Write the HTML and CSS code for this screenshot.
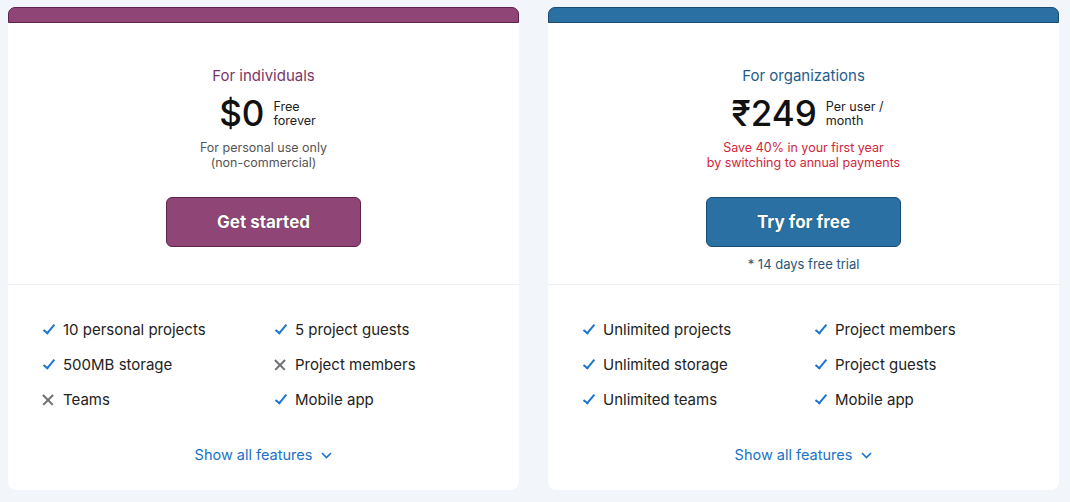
FILE: index.html
```html
<!DOCTYPE html>
<html lang="en">
<head>
    <meta charset="UTF-8">
    <meta name="viewport" content="width=device-width, initial-scale=1.0">
    <title>Pricing</title>
    <link rel="stylesheet" href="styles.css">
</head>
<body>
    <div class="plans">
        <div class="plan plan-personal">
            <div class="plan-band"></div>
            <div class="plan-top">
                <div class="plan-name">For individuals</div>
                <div class="price">
                    <span class="price-amount">$0</span>
                    <span class="price-note">Free<br>forever</span>
                </div>
                <div class="plan-sub">For personal use only<br>(non-commercial)</div>
                <button class="plan-button">Get started</button>
            </div>
            <div class="plan-features">
                <ul class="feature-list">
                    <li><span class="icon yes"></span>10 personal projects</li>
                    <li><span class="icon yes"></span>5 project guests</li>
                    <li><span class="icon yes"></span>500MB storage</li>
                    <li><span class="icon no"></span>Project members</li>
                    <li><span class="icon no"></span>Teams</li>
                    <li><span class="icon yes"></span>Mobile app</li>
                </ul>
                <a class="show-all" href="#">Show all features
                    <svg width="11" height="7" viewBox="0 0 11 7"><path d="M1 1l4.5 4.5L10 1" fill="none" stroke="currentColor" stroke-width="1.6"/></svg>
                </a>
            </div>
        </div>

        <div class="plan plan-org">
            <div class="plan-band"></div>
            <div class="plan-top">
                <div class="plan-name">For organizations</div>
                <div class="price">
                    <span class="price-amount">₹249</span>
                    <span class="price-note">Per user /<br>month</span>
                </div>
                <div class="plan-sub plan-save">Save 40% in your first year<br>by switching to annual payments</div>
                <button class="plan-button">Try for free</button>
                <div class="trial">* 14 days free trial</div>
            </div>
            <div class="plan-features">
                <ul class="feature-list">
                    <li><span class="icon yes"></span>Unlimited projects</li>
                    <li><span class="icon yes"></span>Project members</li>
                    <li><span class="icon yes"></span>Unlimited storage</li>
                    <li><span class="icon yes"></span>Project guests</li>
                    <li><span class="icon yes"></span>Unlimited teams</li>
                    <li><span class="icon yes"></span>Mobile app</li>
                </ul>
                <a class="show-all" href="#">Show all features
                    <svg width="11" height="7" viewBox="0 0 11 7"><path d="M1 1l4.5 4.5L10 1" fill="none" stroke="currentColor" stroke-width="1.6"/></svg>
                </a>
            </div>
        </div>
    </div>
</body>
</html>
```

FILE: styles.css
```css
body {
    margin: 0;
    background-color: #f2f5f9;
    font-family: Inter, 'Noto Sans', sans-serif;
    color: #1d1d1f;
}

.plans {
    display: grid;
    grid-template-columns: 511px 511px;
    gap: 29px;
    padding: 7px 0 0 8px;
}

.plan {
    background-color: #fff;
    border-radius: 8px;
    height: 483px;
    display: flex;
    flex-direction: column;
}

.plan-band {
    height: 14px;
    border: 1px solid;
    border-radius: 7px 7px 0 0;
}

.plan-personal .plan-band {
    background-color: #8f4677;
    border-color: #5e2450;
}

.plan-org .plan-band {
    background-color: #2a70a3;
    border-color: #1a4c72;
}

.plan-top {
    height: 262px;
    padding-top: 43px;
    box-sizing: border-box;
    border-bottom: 1px solid #eef0f3;
    display: flex;
    flex-direction: column;
    align-items: center;
}

.plan-name {
    font-size: 15px;
    line-height: 20px;
}

.plan-personal .plan-name {
    color: #7b3667;
}

.plan-org .plan-name {
    color: #1e5d8c;
}

.price {
    display: flex;
    align-items: center;
    gap: 9px;
    margin-top: 7px;
    margin-left: 8px;
}

.price-amount {
    font-size: 35px;
    font-weight: 500;
    line-height: 40px;
    color: #111;
}

.price-note {
    font-size: 12.6px;
    line-height: 14px;
    color: #222;
    margin-top: 2px;
}

.plan-sub {
    margin-top: 7px;
    font-size: 12.5px;
    line-height: 15px;
    text-align: center;
    color: #555;
}

.plan-save {
    color: #d3263a;
}

.plan-button {
    margin-top: 27px;
    width: 195px;
    height: 50px;
    border: 1px solid;
    border-radius: 6px;
    font-family: inherit;
    font-size: 17px;
    font-weight: 700;
    color: #fff;
    text-shadow: 0 0 1px rgba(0, 0, 0, 0.5);
    cursor: pointer;
}

.plan-personal .plan-button {
    background-color: #8f4677;
    border-color: #5e2450;
}

.plan-org .plan-button {
    background-color: #2a70a3;
    border-color: #1a4c72;
}

.trial {
    margin-top: 9px;
    font-size: 13px;
    line-height: 17px;
    color: #2c5675;
}

.plan-features {
    padding: 35px 0 0 33px;
    display: flex;
    flex-direction: column;
}

.feature-list {
    list-style: none;
    margin: 0;
    padding: 0;
    display: grid;
    grid-template-columns: 232px 232px;
    row-gap: 15px;
}

.feature-list li {
    display: flex;
    align-items: center;
    font-size: 15px;
    line-height: 20px;
    color: #222;
}

.icon {
    width: 14px;
    height: 14px;
    margin-right: 8px;
    position: relative;
}

.icon.yes::before {
    content: "";
    position: absolute;
    left: 5px;
    top: -1px;
    width: 4px;
    height: 10px;
    border: solid #1a73d1;
    border-width: 0 2px 2px 0;
    transform: rotate(40deg);
}

.icon.no::before,
.icon.no::after {
    content: "";
    position: absolute;
    left: 0;
    top: 6px;
    width: 14px;
    height: 1.6px;
    background-color: #6d6f73;
    transform: rotate(45deg);
}

.icon.no::after {
    transform: rotate(-45deg);
}

.show-all {
    align-self: center;
    margin-top: 35px;
    margin-left: -33px;
    display: flex;
    align-items: center;
    gap: 9px;
    font-size: 14.5px;
    line-height: 20px;
    color: #1a72c9;
    text-decoration: none;
}
```
